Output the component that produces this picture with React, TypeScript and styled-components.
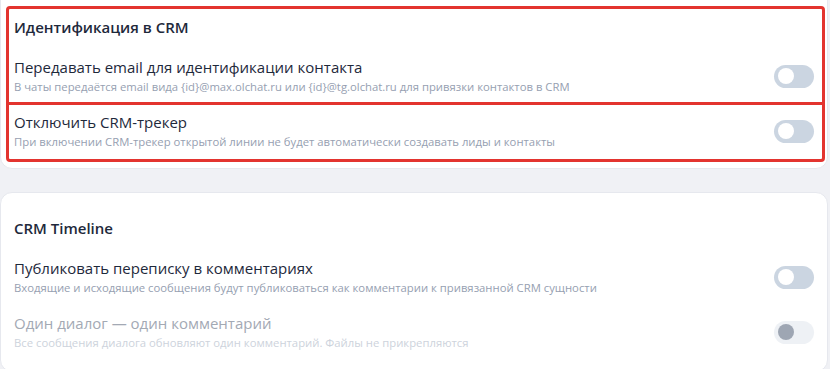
import styled, { createGlobalStyle } from 'styled-components';

const GlobalStyle = createGlobalStyle`
  html, body {
    margin: 0;
    padding: 0;
    background: #f0f1f5;
    font-family: 'Open Sans', 'Noto Sans', sans-serif;
    -webkit-font-smoothing: antialiased;
  }
`;

const Page = styled.div`
  display: flex;
  flex-direction: column;
  gap: 23px;
  padding-right: 2px;
  height: 369px;
  overflow: hidden;
`;

const Card = styled.section<{ $cut?: boolean }>`
  background: #ffffff;
  border: 1px solid #e6e8ee;
  border-radius: 12px;
  margin-top: ${(p) => (p.$cut ? '-16px' : '0')};
  padding: ${(p) => (p.$cut ? '21px 2px 6px 5px' : '25px 13px 20px 13px')};
`;

const Highlight = styled.div`
  border: 3px solid #e3342f;
  border-radius: 4px;
`;

const Marked = styled.div<{ $divided?: boolean }>`
  padding: ${(p) => (p.$divided ? '8px 8px 7px 5px' : '7px 8px 9px 5px')};
  border-bottom: ${(p) => (p.$divided ? '3px solid #e3342f' : 'none')};
`;

const Heading = styled.h3`
  margin: 0 0 20px;
  font-size: 15px;
  line-height: 20px;
  font-weight: 600;
  color: #1e293b;
`;

const Row = styled.div`
  display: flex;
  align-items: center;
  justify-content: space-between;
  gap: 16px;
`;

const Text = styled.div`
  display: flex;
  flex-direction: column;
  gap: 2px;
`;

const Title = styled.span<{ $disabled?: boolean }>`
  font-size: 15px;
  line-height: 20px;
  color: ${(p) => (p.$disabled ? '#a3a9b4' : '#1e293b')};
`;

const Hint = styled.span<{ $disabled?: boolean }>`
  font-size: 11.3px;
  line-height: 16px;
  color: ${(p) => (p.$disabled ? '#cdd3dc' : '#96a0b1')};
`;

const Track = styled.span<{ $disabled?: boolean }>`
  flex: none;
  width: 40px;
  height: 23px;
  border-radius: 12px;
  background: ${(p) => (p.$disabled ? '#eef1f5' : '#cbd5e1')};
  display: flex;
  align-items: center;
  padding: 0 4px;
  box-sizing: border-box;
`;

const Knob = styled.span<{ $disabled?: boolean }>`
  width: 16px;
  height: 16px;
  border-radius: 50%;
  background: ${(p) => (p.$disabled ? '#9ea6b3' : '#ffffff')};
`;

const Stack = styled.div`
  display: flex;
  flex-direction: column;
  gap: 17px;
`;

function Toggle({ disabled }: { disabled?: boolean }) {
  return (
    <Track $disabled={disabled}>
      <Knob $disabled={disabled} />
    </Track>
  );
}

function Setting({
  title,
  hint,
  disabled,
}: {
  title: string;
  hint: string;
  disabled?: boolean;
}) {
  return (
    <Row>
      <Text>
        <Title $disabled={disabled}>{title}</Title>
        <Hint $disabled={disabled}>{hint}</Hint>
      </Text>
      <Toggle disabled={disabled} />
    </Row>
  );
}

export default function App() {
  return (
    <>
      <GlobalStyle />
      <Page>
        <Card $cut>
          <Highlight>
            <Marked $divided>
              <Heading>Идентификация в CRM</Heading>
              <Setting
                title="Передавать email для идентификации контакта"
                hint="В чаты передаётся email вида {id}@max.olchat.ru или {id}@tg.olchat.ru для привязки контактов в CRM"
              />
            </Marked>
            <Marked>
              <Setting
                title="Отключить CRM-трекер"
                hint="При включении CRM-трекер открытой линии не будет автоматически создавать лиды и контакты"
              />
            </Marked>
          </Highlight>
        </Card>
        <Card>
          <Heading>CRM Timeline</Heading>
          <Stack>
            <Setting
              title="Публиковать переписку в комментариях"
              hint="Входящие и исходящие сообщения будут публиковаться как комментарии к привязанной CRM сущности"
            />
            <Setting
              disabled
              title="Один диалог — один комментарий"
              hint="Все сообщения диалога обновляют один комментарий. Файлы не прикрепляются"
            />
          </Stack>
        </Card>
      </Page>
    </>
  );
}
